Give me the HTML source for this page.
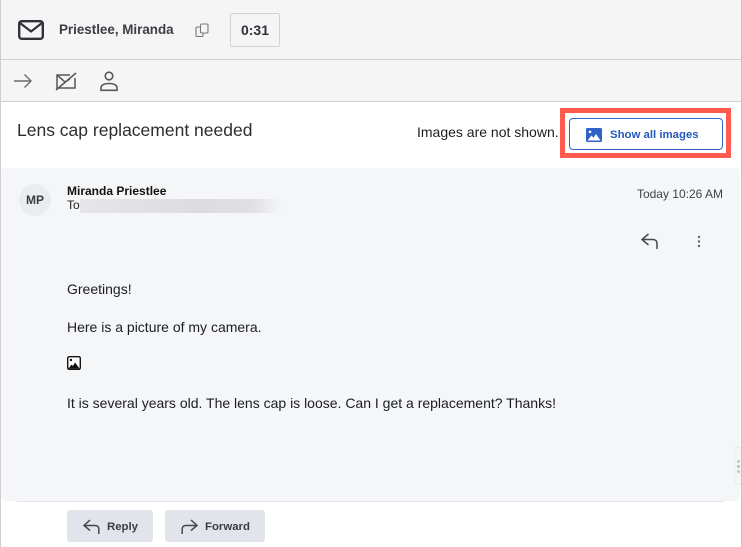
<!DOCTYPE html>
<html><head><meta charset="utf-8">
<style>
html,body{margin:0;padding:0}
body{width:742px;height:547px;position:relative;overflow:hidden;background:#fff;font-family:"Liberation Sans",sans-serif;color:#1f2124}
.a{position:absolute;white-space:nowrap}
svg{position:absolute;overflow:visible;fill:none}
</style></head><body>
<div class="a" style="left:1px;top:0;width:740px;height:59px;background:#f5f5f5"></div>
<div class="a" style="left:1px;top:59px;width:740px;height:1px;background:#cfcfcf"></div>
<div class="a" style="left:1px;top:60px;width:740px;height:41px;background:#f5f5f5"></div>
<div class="a" style="left:1px;top:101px;width:740px;height:1px;background:#cfcfcf"></div>

<svg style="left:18px;top:20px" width="26" height="20" viewBox="0 0 26 20"><rect x="1.200" y="1.200" width="23.600" height="17.600" rx="2.500" stroke="#2f3238" stroke-width="2.400"/><path d="M2 3l11 8.500L24 3" stroke="#2f3238" stroke-width="2.200"/></svg>
<div class="a" style="left:59px;top:22px;font-size:13.400px;line-height:16px;font-weight:700;color:#3a3d42">Priestlee, Miranda</div>
<svg style="left:195px;top:23px" width="14" height="14" viewBox="0 0 14 14" stroke="#77797d" stroke-width="1.100"><rect x="5.500" y="1" width="7.500" height="9" rx="1.200"/><path d="M5.500 4H2a1 1 0 0 0-1 1v7.500a1 1 0 0 0 1 1h5a1 1 0 0 0 1-1V10"/></svg>
<div class="a" style="left:230px;top:13px;width:48px;height:32px;border:1px solid #d2d2d2;border-radius:2px;text-align:center;line-height:32px;font-size:14px;font-weight:700;color:#2f3238">0:31</div>

<svg style="left:14px;top:73px" width="18" height="16" viewBox="0 0 18 16" stroke="#6a6c70" stroke-width="1.400"><path d="M0 8h17M10.500 1.500L17 8l-6.500 6.500"/></svg>
<svg style="left:56px;top:72px" width="21" height="19" viewBox="0 0 21 19" stroke="#55575b" stroke-width="1.500"><path d="M14 3H1v13h18V6M1 3l8 7 5-3M0 18L20 1"/></svg>
<svg style="left:100px;top:71px" width="18" height="20" viewBox="0 0 18 20" stroke="#55575b" stroke-width="1.600"><circle cx="9" cy="5" r="3.800"/><path d="M1 19.300v-2.500c0-2.500 3-4.300 8-4.300s8 1.800 8 4.300v2.500z"/></svg>

<div class="a" style="left:17px;top:119px;font-size:17.500px;line-height:22px;color:#2b2d30">Lens cap replacement needed</div>
<div class="a" style="left:417px;top:124px;font-size:14px;line-height:16px;color:#1c1d20">Images are not shown.</div>

<div class="a" style="left:560px;top:108px;width:161px;height:40px;border:5px solid #ff5a4d"></div>
<div class="a" style="left:569px;top:118px;width:152px;height:30px;border:1px solid #2f63c8;border-radius:4px;background:#fff"></div>
<svg style="left:586px;top:128px" width="16" height="14" viewBox="0 0 16 14"><rect width="16" height="14" rx="1.500" fill="#2f63c8"/><path d="M1.500 12.500l4-5 2 2.200 2.500-3.700 4.500 6.500z" fill="#fff"/><circle cx="4" cy="3.800" r="1.300" fill="#fff"/></svg>
<div class="a" style="left:610px;top:127px;font-size:11.400px;line-height:16px;font-weight:700;color:#2458bd">Show all images</div>

<div class="a" style="left:1px;top:168px;width:739px;height:333px;background:#f5f6f8;border-radius:4px"></div>
<div class="a" style="left:17px;top:501px;width:708px;height:1px;background:#e2e4ea"></div>
<div class="a" style="left:19px;top:184px;width:32px;height:32px;border-radius:50%;background:#ebecf0;text-align:center;line-height:32px;font-size:12px;font-weight:700;color:#3a3d42">MP</div>
<div class="a" style="left:67px;top:184px;font-size:12px;line-height:14px;font-weight:700;color:#111">Miranda Priestlee</div>
<div class="a" style="left:67px;top:198px;font-size:12px;line-height:14px;color:#222">To</div>
<div class="a" style="left:80px;top:199px;width:202px;height:14px;background:linear-gradient(90deg,#e6e6e8 0,#dcdcde 60%,#e0e0e2 85%,#f5f6f8 100%)"></div>
<div class="a" style="right:19px;top:187px;font-size:12px;line-height:14px;color:#3f4145">Today 10:26 AM</div>

<svg style="left:641px;top:233px" width="17" height="16" viewBox="0 0 17 16" stroke="#45474b" stroke-width="1.500"><path d="M7.500 1L1 6.500l6.500 5.500M1 6.500h11c2.500 0 4 1.500 4 4V16"/></svg>
<svg style="left:697px;top:235px" width="4" height="13" viewBox="0 0 4 13"><circle cx="2" cy="2" r="1.200" fill="#65676b"/><circle cx="2" cy="6.500" r="1.200" fill="#65676b"/><circle cx="2" cy="11" r="1.200" fill="#65676b"/></svg>

<div class="a" style="left:67px;top:281px;font-size:14px;line-height:16px;color:#1c1d20">Greetings!</div>
<div class="a" style="left:67px;top:319px;font-size:14px;line-height:16px;color:#1c1d20">Here is a picture of my camera.</div>
<svg style="left:67px;top:356px" width="14" height="14" viewBox="0 0 14 14"><rect x=".7" y=".7" width="12.600" height="12.600" rx="1.500" fill="#fff" stroke="#111" stroke-width="1.400"/><path d="M1.500 12.500l3-4 1.500 1.500 2-3.500 4.500 6z" fill="#111"/><circle cx="4" cy="4" r="1.200" fill="#111"/></svg>
<div class="a" style="left:67px;top:395px;font-size:14px;line-height:16px;color:#1c1d20">It is several years old. The lens cap is loose. Can I get a replacement? Thanks!</div>

<div class="a" style="left:734px;top:447px;width:8px;height:38px;background:#f5f5f5;border:1px solid #eaebee;border-right:0;border-radius:3px 0 0 3px;box-sizing:border-box"></div>
<div class="a" style="left:737px;top:460px;width:3px;height:3px;background:#c4c5c8;border-radius:50%"></div>
<div class="a" style="left:737px;top:465px;width:3px;height:3px;background:#c4c5c8"></div>
<div class="a" style="left:737px;top:470px;width:3px;height:3px;background:#c4c5c8;border-radius:50%"></div>

<div class="a" style="left:67px;top:510px;width:86px;height:32px;background:#e2e4eb;border-radius:3px"></div>
<svg style="left:83px;top:519px" width="17" height="15" viewBox="0 0 17 15" stroke="#45474b" stroke-width="1.500"><path d="M7 1L1 6.500 7 11.500M1 6.500h11c2.500 0 3.800 1.300 3.800 3.500V15"/></svg>
<div class="a" style="left:107px;top:519px;font-size:11.400px;line-height:16px;font-weight:700;color:#3a3d42">Reply</div>
<div class="a" style="left:165px;top:510px;width:100px;height:32px;background:#e2e4eb;border-radius:3px"></div>
<svg style="left:181px;top:519px" width="17" height="15" viewBox="0 0 17 15" stroke="#45474b" stroke-width="1.500"><path d="M10 1l6 5.500-6 5M16 6.500H5C2.500 6.500 1.200 7.800 1.200 10V15"/></svg>
<div class="a" style="left:205px;top:519px;font-size:11.400px;line-height:16px;font-weight:700;color:#3a3d42">Forward</div>

<div class="a" style="left:0;top:0;width:1px;height:547px;background:#cfcfd2"></div>
<div class="a" style="left:741px;top:0;width:1px;height:547px;background:#c4c4c6"></div>
</body></html>
